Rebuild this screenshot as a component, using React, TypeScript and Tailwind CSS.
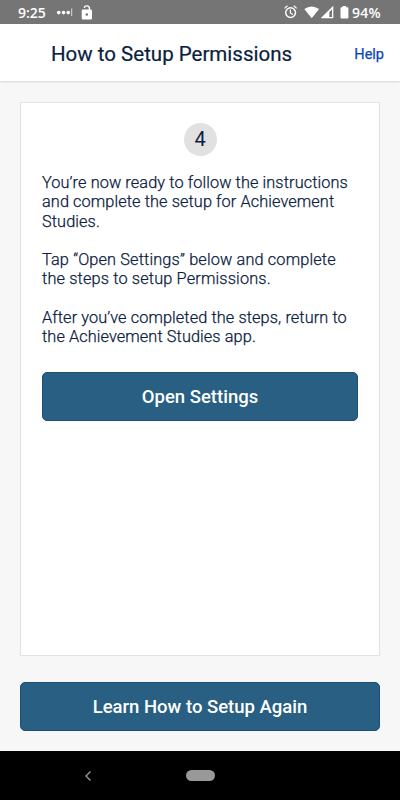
import React from "react";

function StatusBar() {
  return (
    <div className="flex h-6 shrink-0 items-center bg-[#757575] pl-[18px] text-white">
      <span className="w-[28px] pt-px font-['Open_Sans','Noto_Sans',sans-serif] text-[14px] leading-6 font-semibold">9:25</span>
      <svg className="ml-[10px]" width="17" height="24" viewBox="0 0 17 24" fill="#fff">
        <circle cx="2.7" cy="12.6" r="1.8" />
        <circle cx="7.5" cy="12.6" r="1.8" />
        <circle cx="12.2" cy="12.6" r="1.8" />
        <rect x="15.2" y="8.5" width="1" height="7.5" opacity=".75" />
      </svg>
      <svg className="ml-2" width="12" height="24" viewBox="0 0 12 24" fill="none">
        <path d="M3.3 7.9a2.5 2.2 0 0 1 5.1 .4V10" stroke="#fff" strokeWidth="1.4" />
        <path fillRule="evenodd" fill="#fff" d="M1.9 9.6h7.9a1.2 1.2 0 0 1 1.2 1.2v7.5a1.2 1.2 0 0 1-1.2 1.2H1.9a1.2 1.2 0 0 1-1.2-1.2v-7.5a1.2 1.2 0 0 1 1.2-1.2zM5.8 13.2a1.3 1.3 0 1 0 0 2.6a1.3 1.3 0 0 0 0-2.6z" />
      </svg>
      <svg className="ml-auto" width="66" height="24" viewBox="284 0 66 24" fill="none">
        <circle cx="290.6" cy="12.6" r="4.9" stroke="#fff" strokeWidth="1.4" />
        <path d="M290.4 9.4v3.5l2.4 1.5M284.5 8.4l3-2.6M296.7 8.4l-3-2.6" stroke="#fff" strokeWidth="1.2" />
        <path d="M304.3 8.9q7.3-5 14.8 0L311.7 18.2z" fill="#fff" />
        <path fillRule="evenodd" d="M333.3 5.8V18.2H320.7zM332 9.2L329.3 11.9V17H332z" fill="#fff" />
        <path d="M342.6 6h3.6v1.3h1.3a.9.9 0 0 1 .9.9v9.4a.9.9 0 0 1-.9.9h-6.1a.9.9 0 0 1-.9-.9V8.2a.9.9 0 0 1 .9-.9h1.2z" fill="#fff" />
      </svg>
      <span className="ml-[2px] w-[48px] whitespace-nowrap pt-px font-['Open_Sans','Noto_Sans',sans-serif] text-[14px] leading-6 font-semibold tracking-[0.3px]">94%</span>
    </div>
  );
}

const buttonClass =
  "flex h-[49px] w-full shrink-0 items-center justify-center rounded-[5px] border border-[#1b507a] bg-[#285f82] pt-[3px] text-[18.5px] font-medium text-white";

export default function App() {
  return (
    <div className="flex h-[800px] w-[400px] flex-col overflow-hidden bg-[#f7f7f7] font-[Roboto,sans-serif] text-[#0a2040]">
      <StatusBar />
      <header className="flex h-[57px] shrink-0 items-center justify-between bg-white pt-[3px] pr-[16px] pl-[51px] shadow-[0_1px_2px_rgba(0,0,0,0.14)]">
        <h1 className="text-[20.5px] font-normal whitespace-nowrap [-webkit-text-stroke:0.2px]">How to Setup Permissions</h1>
        <a className="pt-px text-[14.5px] font-normal text-[#0c45b5] [-webkit-text-stroke:0.25px]">Help</a>
      </header>
      <main className="flex grow flex-col px-5 pt-[21px] pb-5">
        <section className="flex h-[554px] shrink-0 flex-col border border-[#e2e2e2] bg-white px-[21px] pt-5">
          <div className="flex size-[33px] shrink-0 items-center justify-center self-center rounded-full bg-[#e1e1e1] pb-[2px] text-[20px]">4</div>
          <div className="mt-[17px] flex flex-col gap-[19.3px] text-[16.3px] leading-[19.3px] font-light tracking-[0.1px] whitespace-nowrap [-webkit-text-stroke:0.25px]">
            <p>You’re now ready to follow the instructions<br />and complete the setup for Achievement<br />Studies.</p>
            <p className="tracking-[0.15px]">Tap “Open Settings” below and complete<br />the steps to setup Permissions.</p>
            <p>After you’ve completed the steps, return to<br />the Achievement Studies app.</p>
          </div>
          <div className="mt-[25px]">
            <button className={buttonClass}>Open Settings</button>
          </div>
        </section>
        <div className="mt-[26px]">
          <button className={buttonClass}>Learn How to Setup Again</button>
        </div>
      </main>
      <nav className="flex h-[49px] shrink-0 items-center bg-black">
        <svg className="ml-[84px]" width="8" height="12" viewBox="0 0 8 12" fill="none">
          <path d="M6.5 1.5L2 6l4.5 4.5" stroke="#999" strokeWidth="1.4" />
        </svg>
        <div className="ml-[94px] h-[11px] w-[29px] rounded-full bg-[#999]" />
      </nav>
    </div>
  );
}
